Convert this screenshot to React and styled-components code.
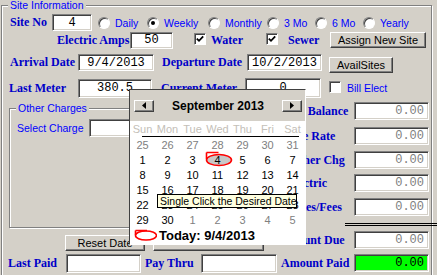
import React from "react";
import styled, { createGlobalStyle } from "styled-components";

const FACE = "#d4d0c8";

const GlobalStyle = createGlobalStyle`
  html, body { margin: 0; padding: 0; background: ${FACE}; overflow: hidden; }
`;

const Screen = styled.div`
  position: relative;
  width: 437px;
  height: 275px;
  overflow: hidden;
  background: ${FACE};
  font-family: "Liberation Sans", Arial, sans-serif;
  font-size: 11px;
`;

const Group = styled.fieldset`
  box-sizing: border-box;
  margin: 0 0 0 ${(p) => p.$left || 0}px;
  padding: 0;
  width: ${(p) => p.$width}px;
  height: ${(p) => p.$height}px;
  min-inline-size: 0;
  border: 1px solid #808080;
  box-shadow: inset 1px 1px 0 #fff, 1px 1px 0 #fff;
`;

const Legend = styled.legend`
  margin-left: 6px;
  padding: 0 2px;
  height: 11px;
  line-height: 11px;
  color: #0000ff;
  font-size: 10.5px;
  background: ${FACE};
`;

const Content = styled.div`
  padding: 3px 0 0 8px;
`;

const Row = styled.div`
  display: flex;
  align-items: ${(p) => p.$align || "center"};
  height: ${(p) => p.$h}px;
  margin-top: ${(p) => p.$mt || 0}px;
  margin-left: ${(p) => p.$ml || 0}px;
`;

const Caption = styled.span`
  flex: none;
  width: ${(p) => (p.$w ? `${p.$w}px` : "auto")};
  margin-left: ${(p) => p.$ml || 0}px;
  font-family: "Liberation Serif", "Times New Roman", serif;
  font-weight: bold;
  font-size: 12px;
  line-height: ${(p) => p.$lh || "normal"};
  color: #0000c8;
  white-space: nowrap;
`;

const Plain = styled.span`
  flex: none;
  width: ${(p) => (p.$w ? `${p.$w}px` : "auto")};
  margin-left: ${(p) => p.$ml || 0}px;
  color: #0000ff;
  font-size: 10.5px;
  white-space: nowrap;
`;

const Field = styled.input`
  flex: none;
  box-sizing: border-box;
  width: ${(p) => p.$w}px;
  height: ${(p) => p.$h || 17}px;
  margin: ${(p) => p.$mt || 0}px 0 0 ${(p) => p.$ml || 0}px;
  padding: 0 ${(p) => (p.$align === "right" ? 4 : 1)}px 0 1px;
  border: 1px solid;
  border-color: #808080 #fff #fff #808080;
  box-shadow: inset 1px 1px 0 #404040, inset -1px -1px 0 ${FACE};
  background: ${(p) => p.$bg || "#fff"};
  color: ${(p) => p.$color || "#000"};
  font-family: "Liberation Mono", "Courier New", monospace;
  font-size: 12px;
  text-align: ${(p) => p.$align || "center"};
  outline: none;
`;

const Button = styled.button`
  flex: none;
  box-sizing: border-box;
  width: ${(p) => p.$w}px;
  height: ${(p) => p.$h || 16}px;
  margin: ${(p) => p.$mt || 0}px 0 0 ${(p) => p.$ml || 0}px;
  padding: 0;
  border: 1px solid;
  border-color: #fff #404040 #404040 #fff;
  box-shadow: inset -1px -1px 0 #808080;
  background: ${FACE};
  color: #000;
  font-family: "Liberation Sans", Arial, sans-serif;
  font-size: 11px;
  line-height: 14px;
`;

const Option = styled.label`
  flex: none;
  display: flex;
  align-items: center;
  width: ${(p) => (p.$w ? `${p.$w}px` : "auto")};
  color: #0000ff;
  font-size: 10.5px;
`;

const Radio = styled.span`
  position: relative;
  flex: none;
  box-sizing: border-box;
  width: 12px;
  height: 12px;
  margin-right: 5px;
  border-radius: 50%;
  border: 1px solid;
  border-color: #808080 #fff #fff #808080;
  box-shadow: inset 1px 1px 0 #404040;
  background: #fff;
  &::after {
    content: "";
    display: ${(p) => (p.$on ? "block" : "none")};
    position: absolute;
    left: 3px;
    top: 3px;
    width: 4px;
    height: 4px;
    border-radius: 50%;
    background: #000;
  }
`;

const Box = styled.span`
  flex: none;
  box-sizing: border-box;
  width: 12px;
  height: 12px;
  margin: ${(p) => p.$mt || 0}px ${(p) => p.$mr || 0}px 0 ${(p) => p.$ml || 0}px;
  border: 1px solid;
  border-color: #808080 #fff #fff #808080;
  box-shadow: inset 1px 1px 0 #404040;
  background: #fff;
  display: flex;
  align-items: center;
  justify-content: center;
`;

const Lower = styled.div`
  display: grid;
  grid-template-columns: 269px 151px;
  align-items: start;
  margin: 4px 0 0 -1px;
`;

const LeftCol = styled.div`
  display: flex;
  flex-direction: column;
  margin-top: 1px;
`;

const RightCol = styled.div`
  display: flex;
  flex-direction: column;
  align-items: flex-start;
`;

/* a row of the totals column; $rule draws the double total line under it */
const SumRow = styled.div`
  position: relative;
  display: flex;
  align-items: center;
  width: 151px;
  height: 18px;
  margin-top: ${(p) => p.$mt || 0}px;
  &::after {
    content: "";
    display: ${(p) => (p.$rule ? "block" : "none")};
    position: absolute;
    left: 67px;
    top: 25px;
    width: 92px;
    height: 1px;
    border-top: 1px solid #000;
    border-bottom: 1px solid #000;
  }
`;

const SumLabel = styled(Caption)`
  box-sizing: border-box;
  width: 76px;
  padding-left: ${(p) => p.$indent}px;
`;

/* calendar popup */
const Calendar = styled.div`
  position: absolute;
  z-index: 2;
  left: 129px;
  top: 89px;
  width: 177px;
  height: 156px;
  box-sizing: border-box;
  border: 1px solid;
  border-color: #404040 #fff #fff #404040;
  background: #fff;
  display: flex;
  flex-direction: column;
`;

const CalHead = styled.div`
  display: flex;
  align-items: center;
  height: 31px;
  padding: 0 3px 0 4px;
  background: ${FACE};
`;

const Arrow = styled.div`
  box-sizing: border-box;
  width: 20px;
  height: 12px;
  border: 1px solid;
  border-color: #fff #404040 #404040 #fff;
  box-shadow: inset -1px -1px 0 #808080;
  display: flex;
  align-items: center;
  justify-content: center;
`;

const Month = styled.div`
  flex: 1;
  text-align: center;
  font-weight: bold;
  font-size: 12px;
  color: #000;
`;

const Week = styled.div`
  display: grid;
  grid-template-columns: repeat(7, 25px);
  height: ${(p) => p.$h || 15}px;
`;

const DayName = styled.div`
  display: flex;
  align-items: center;
  justify-content: center;
  color: #c4c0b8;
  font-size: 11px;
`;

const CalRule = styled.div`
  width: 157px;
  height: 1px;
  margin-left: 12px;
  background: #000;
`;

const Day = styled.div`
  position: relative;
  display: flex;
  align-items: center;
  justify-content: center;
  font-size: 11px;
  color: ${(p) => (p.$muted ? "#808080" : "#000")};
`;

const DayNum = styled.span`
  position: relative;
`;

const Ring = styled.svg`
  position: absolute;
  left: 0;
  top: -1px;
  overflow: visible;
`;

const TodayRow = styled.div`
  display: flex;
  align-items: center;
  height: 16px;
  padding-left: 4px;
  gap: 2px;
  font-weight: bold;
  font-size: 13px;
  color: #000;
`;

const Tip = styled.div`
  position: absolute;
  z-index: 3;
  left: 157px;
  top: 194px;
  width: 140px;
  height: 14px;
  box-sizing: border-box;
  padding-left: 2px;
  border: 1px solid #000;
  background: #ffffe1;
  color: #000;
  font-size: 10.5px;
  line-height: 12px;
  white-space: nowrap;
`;

const weeks = [
  [[25, 1], [26, 1], [27, 1], [28, 1], [29, 1], [30, 1], [31, 1]],
  [[1], [2], [3], [4, 0, 1], [5], [6], [7]],
  [[8], [9], [10], [11], [12], [13], [14]],
  [[15], [16], [17], [18], [19], [20], [21]],
  [[22], [23], [24], [25], [26], [27], [28]],
  [[29], [30], [1, 1], [2, 1], [3, 1], [4, 1], [5, 1]],
];

const options = [
  ["Daily", 49],
  ["Weekly", 61, true],
  ["Monthly", 59],
  ["3 Mo", 48],
  ["6 Mo", 48],
  ["Yearly"],
];

const totals = [
  ["Prev Balance", 0, 3],
  ["Site Rate", 7, 11],
  ["Other Chg", 6, 12],
  ["Electric", 5, 9],
  ["Taxes/Fees", 6, 9, true],
];

function Tick() {
  return (
    <svg width="8" height="8" viewBox="0 0 8 8">
      <polyline points="0.8,3.6 3,5.8 7.2,1.4" fill="none" stroke="#000" strokeWidth="1.8" />
    </svg>
  );
}

function Check({ on, ml, mr, mt }) {
  return (
    <Box $ml={ml} $mr={mr} $mt={mt}>
      {on && <Tick />}
    </Box>
  );
}

function Scribble({ w, h }) {
  return (
    <Ring width={w} height={h} viewBox={`0 0 ${w} ${h}`}>
      <ellipse cx={w / 2 + 0.5} cy={h / 2 + 1} rx={w / 2 - 1} ry={h / 2 - 2.5} fill="#c8c8c8" stroke="#f00" strokeWidth="1.6" />
      <path d={`M1.5 1.5 H${w / 2} M1.5 1.5 V${h / 2}`} fill="none" stroke="#f00" strokeWidth="1.6" />
    </Ring>
  );
}

export default function App() {
  return (
    <Screen>
      <GlobalStyle />
      <Group $left={1} $width={431} $height={300}>
        <Legend>Site Information</Legend>
        <Content>
          <Row $h={17}>
            <Caption $w={42}>Site No</Caption>
            <Field $w={40} defaultValue="4" readOnly />
            <Row $h={17} $ml={6}>
              {options.map(([label, w, on]) => (
                <Option key={label} $w={w}>
                  <Radio $on={on} />
                  {label}
                </Option>
              ))}
            </Row>
          </Row>

          <Row $h={18}>
            <Caption $w={73} $ml={47}>Electric Amps</Caption>
            <Field $w={43} defaultValue="50" readOnly />
            <Check on ml={21} mr={5} mt={-3} />
            <Caption $w={55}>Water</Caption>
            <Check on mr={10} mt={-3} />
            <Caption $w={42}>Sewer</Caption>
            <Button $w={96}>Assign New Site</Button>
          </Row>

          <Row $h={19} $mt={5} $align="flex-start">
            <Caption $w={68} $lh="17px">Arrival Date</Caption>
            <Field $w={76} defaultValue="9/4/2013" readOnly />
            <Caption $w={85} $ml={8} $lh="17px">Departure Date</Caption>
            <Field $w={75} defaultValue="10/2/2013" readOnly />
            <Button $w={64} $ml={7} $mt={3}>AvailSites</Button>
          </Row>

          <Row $h={20} $mt={5}>
            <Caption $w={69} $ml={-1}>Last Meter</Caption>
            <Field $w={74} $h={19} defaultValue="380.5" readOnly />
            <Caption $w={84} $ml={9}>Current Meter</Caption>
            <Field $w={76} $h={20} defaultValue="0" readOnly />
            <Check ml={8} mr={6} mt={-2} />
            <Plain>Bill Elect</Plain>
          </Row>

          <Lower>
            <LeftCol>
              <Group $width={262} $height={125}>
                <Legend>Other Charges</Legend>
                <Row $h={18} $mt={5}>
                  <Plain $w={72} $ml={7}>Select Charge</Plain>
                  <Field $w={150} $h={18} readOnly />
                </Row>
              </Group>
              <Row $h={16} $mt={7}>
                <Button $w={80} $ml={56}>Reset Date</Button>
                <Button $w={111} $ml={8} aria-label="Calendar" />
              </Row>
              <Row $h={19} $mt={3}>
                <Caption $w={58} $ml={-1}>Last Paid</Caption>
                <Field $w={75} $h={19} readOnly />
                <Caption $w={56} $ml={4}>Pay Thru</Caption>
                <Field $w={76} $h={19} readOnly />
              </Row>
            </LeftCol>

            <RightCol>
              {totals.map(([label, mt, indent, rule]) => (
                <SumRow key={label} $mt={mt} $rule={rule}>
                  <SumLabel $indent={indent}>{label}</SumLabel>
                  <Field $w={75} $h={18} $align="right" $color="#808080" defaultValue="0.00" readOnly />
                </SumRow>
              ))}
              <SumRow $mt={15}>
                <SumLabel $indent={1}>Amount Due</SumLabel>
                <Field $w={75} $h={18} $align="right" $color="#808080" defaultValue="0.00" readOnly />
              </SumRow>
              <SumRow $mt={5}>
                <SumLabel $indent={3}>Amount Paid</SumLabel>
                <Field $w={75} $h={18} $align="right" $bg="#00ff00" defaultValue="0.00" readOnly />
              </SumRow>
            </RightCol>
          </Lower>
        </Content>
      </Group>

      <Calendar>
        <CalHead>
          <Arrow>
            <svg width="4" height="7" viewBox="0 0 4 7"><path d="M4 0 L0 3.5 L4 7 Z" fill="#000" /></svg>
          </Arrow>
          <Month>September 2013</Month>
          <Arrow>
            <svg width="4" height="7" viewBox="0 0 4 7"><path d="M0 0 L4 3.5 L0 7 Z" fill="#000" /></svg>
          </Arrow>
        </CalHead>
        <Week>
          {["Sun", "Mon", "Tue", "Wed", "Thu", "Fri", "Sat"].map((d) => (
            <DayName key={d}>{d}</DayName>
          ))}
        </Week>
        <CalRule />
        {weeks.map((week, i) => (
          <Week key={i}>
            {week.map(([n, muted, today]) => (
              <Day key={`${i}-${n}`} $muted={muted}>
                {today && <Scribble w={27} h={16} />}
                <DayNum>{n}</DayNum>
              </Day>
            ))}
          </Week>
        ))}
        <TodayRow>
          <svg width="23" height="12" viewBox="0 0 23 12">
            <ellipse cx="12" cy="6.5" rx="10.5" ry="4.5" fill="none" stroke="#f00" strokeWidth="1.6" />
            <path d="M1.5 1.5 H13 M1.5 1.5 V6" fill="none" stroke="#f00" strokeWidth="1.6" />
          </svg>
          Today: 9/4/2013
        </TodayRow>
      </Calendar>

      <Tip>Single Click the Desired Date</Tip>
    </Screen>
  );
}
